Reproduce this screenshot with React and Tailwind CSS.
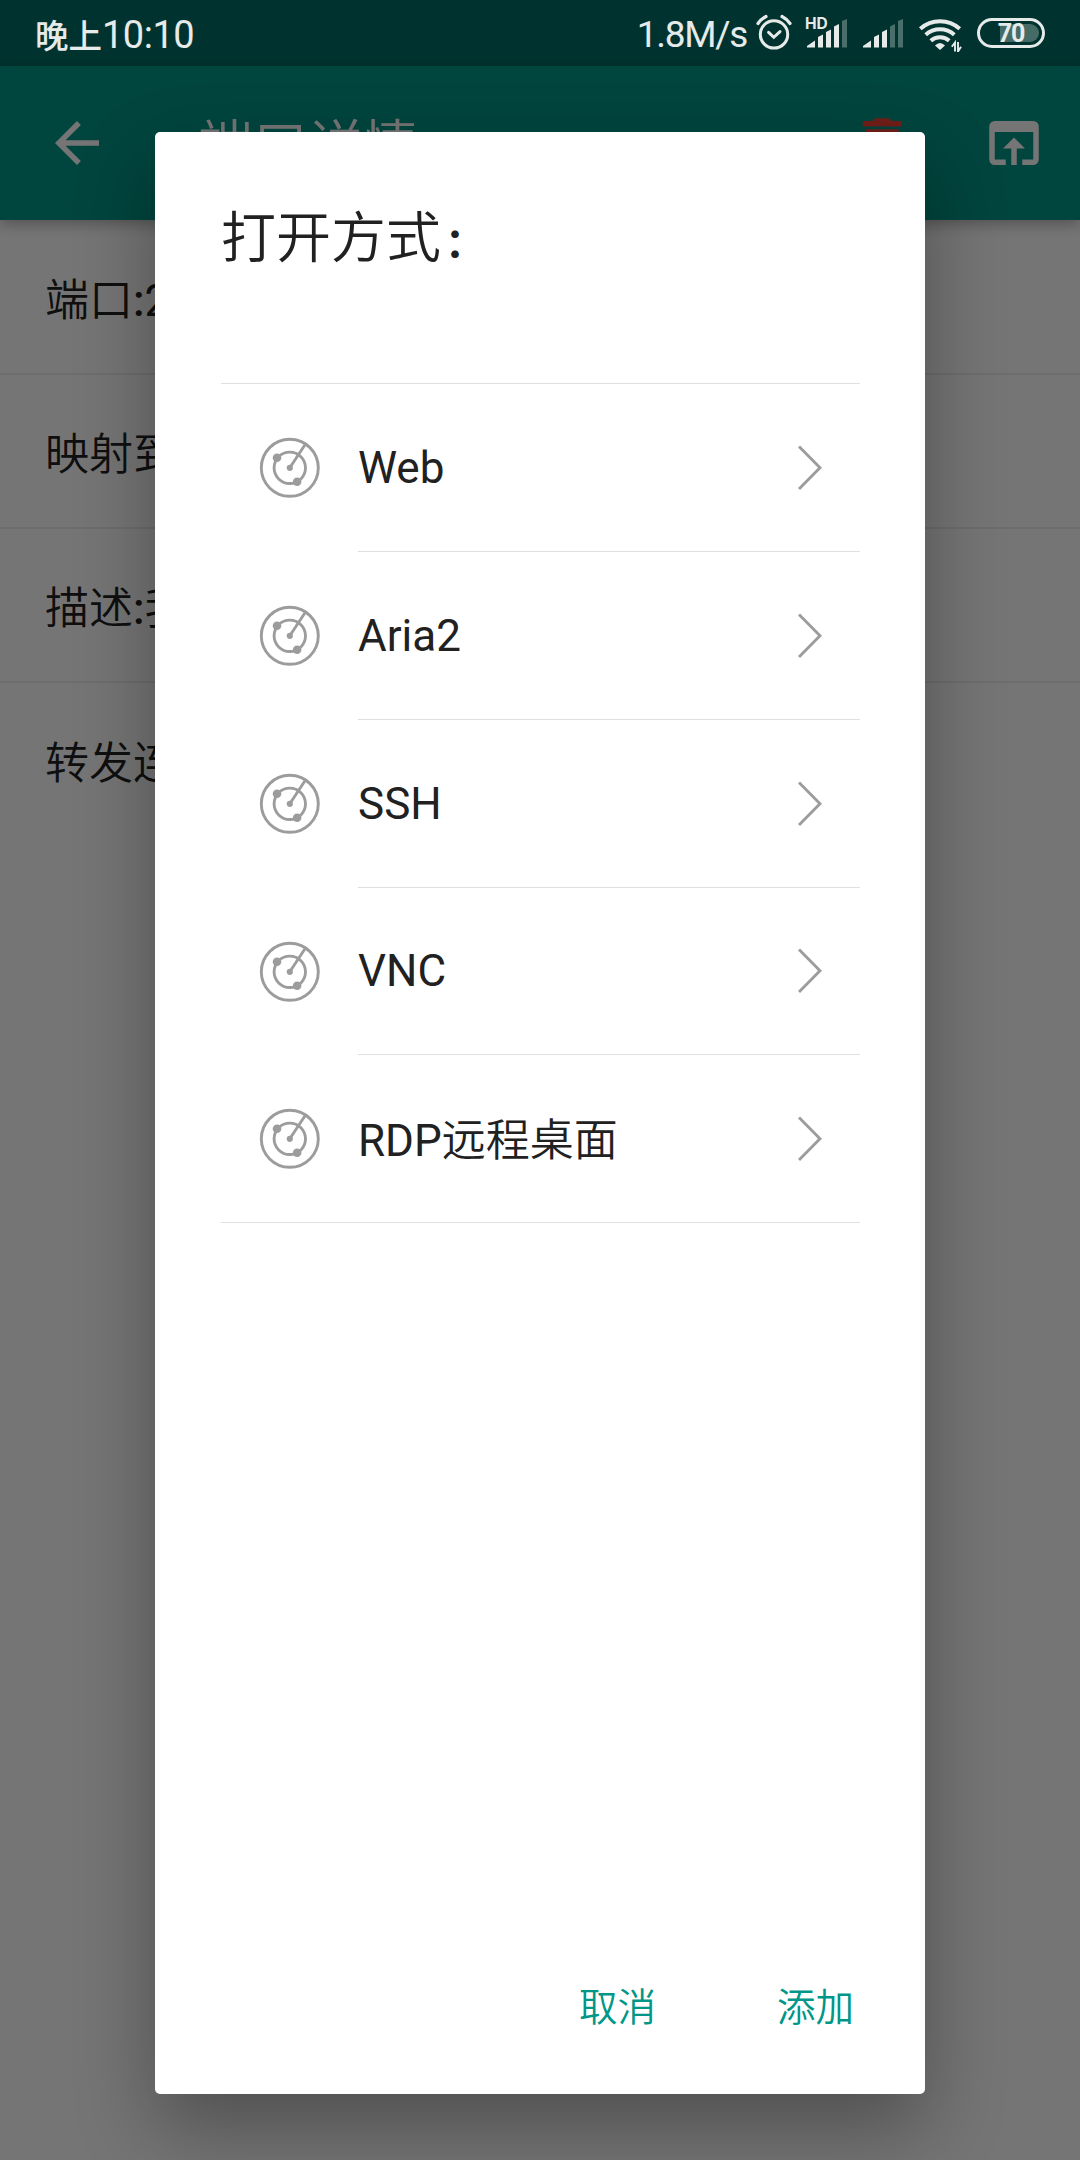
import React from "react";
import { MdArrowBack, MdDelete, MdOpenInBrowser } from "react-icons/md";

const details = [
  { label: "端口", value: "22" },
  { label: "映射到", value: "" },
  { label: "描述", value: "我的" },
  { label: "转发连接", value: "" },
];
const methods = [
  { latin: "Web", row: "h-[168px]" },
  { latin: "Aria2", row: "h-[168px]" },
  { latin: "SSH", row: "h-[168px]" },
  { latin: "VNC", row: "h-[167px]" },
  { latin: "RDP", cjk: "远程桌面", row: "h-[167px]" },
];

function RadarIcon() {
  return (
    <svg className="h-[66px] w-[66px] shrink-0" viewBox="0 0 66 66" fill="none" stroke="#9c9c9c" strokeWidth="2.9">
      <circle cx="32.8" cy="32.8" r="28.5" />
      <circle cx="32.8" cy="32.8" r="15.7" />
      <path d="M32.800 32.800L48.500 9" />
      <circle cx="32.8" cy="32.8" r="3.1" fill="#9c9c9c" stroke="none" />
      <circle cx="20" cy="22.8" r="4.3" fill="#9c9c9c" stroke="none" />
      <circle cx="40.1" cy="46.8" r="4.3" fill="#9c9c9c" stroke="none" />
    </svg>
  );
}

function Chevron() {
  return (
    <svg className="h-[46px] w-[24px] shrink-0" viewBox="0 0 24 46" fill="none" stroke="#9c9c9c" strokeWidth="2.9">
      <path d="M1 1.500L22 22.700L1 44" />
    </svg>
  );
}

function AlarmIcon() {
  return (
    <svg className="h-9 w-9 shrink-0" viewBox="0 0 36 36" fill="none" stroke="#e6ebea" strokeWidth="3">
      <circle cx="18" cy="20.4" r="13.7" />
      <path d="M12.6 18.3L17.8 23.3L24 17.6" strokeLinecap="round" />
      <path d="M2 9.5Q5 5 10 2.5M34 9.5Q31 5 26 2.5" strokeWidth="3.2" strokeLinecap="round" />
    </svg>
  );
}

function Signal({ level }) {
  const bars = [
    "M0 28.500L0 27L8 21.500V28.500Z",
    "M11 28.500V18L16 15.500V28.500Z",
    "M19 28.500V13L24 10.500V28.500Z",
    "M27 28.500V7.500L32 5V28.500Z",
    "M35 28.500V2L40 0V28.500Z",
  ];
  return (
    <svg className="h-[29px] w-10 shrink-0" viewBox="0 0 40 29">
      {bars.map((d, i) => (
        <path key={d} d={d} fill={i < level ? "#e6ebea" : "#4a6f6a"} />
      ))}
    </svg>
  );
}

function WifiIcon() {
  return (
    <svg className="h-[34px] w-[43px] shrink-0" viewBox="0 0 43 34" fill="none" stroke="#e6ebea" strokeWidth="4">
      <path d="M1.300 10.800A29.500 29.500 0 0 1 40.700 10.800" />
      <path d="M6.700 16.800A21.500 21.500 0 0 1 35.300 16.800" />
      <path d="M11.800 22.700A14 14 0 0 1 30.200 22.700" />
      <path d="M16 27.500Q21 22.500 26 27.500L21 32Z" fill="#e6ebea" stroke="none" />
      <path d="M36 33.500V24.500L32.800 28.800M39 24V33.500L42 28.800" strokeWidth="1.9" />
    </svg>
  );
}

function StatusBar() {
  return (
    <div className="absolute inset-x-0 top-0 z-20 flex h-[66px] items-center px-[35px] text-[#e6ebea]">
      <div className="mt-[4px] flex items-center whitespace-nowrap leading-none">
        <span className="-mt-[2px] font-['Noto_Sans_CJK_SC',sans-serif] text-[33.500px] font-medium">晚上</span>
        <span className="font-['Roboto',sans-serif] text-[38px] tracking-[-0.5px]">10:10</span>
      </div>
      <div className="ml-auto flex items-center">
        <span className="mr-[9px] mt-[3px] whitespace-nowrap font-['Roboto',sans-serif] text-[37px] leading-none tracking-[-1.3px]">1.8M/s</span>
        <div className="-mt-[2px]">
          <AlarmIcon />
        </div>
        <div className="relative ml-[15px]">
          <Signal level={4} />
          <span className="absolute -left-[2px] -top-[3px] font-['Inter',sans-serif] text-[15.500px] font-bold leading-none">HD</span>
        </div>
        <div className="ml-4">
          <Signal level={3} />
        </div>
        <div className="ml-[16px] mt-[3px]">
          <WifiIcon />
        </div>
        <div className="relative ml-[15px] flex h-[30px] w-[68px] items-center justify-center rounded-full border-[3px] border-[#e6ebea]">
          <div className="absolute left-[20px] top-[3px] h-[18px] w-[39px] rounded-r-full bg-[#456b66]" />
          <span className="relative mt-[1px] font-['Roboto',sans-serif] text-[25px] font-bold leading-none tracking-[-1px]">70</span>
        </div>
      </div>
    </div>
  );
}

export default function App() {
  return (
    <div className="relative h-[2160px] w-[1080px] overflow-hidden bg-white font-['Roboto','Noto_Sans_CJK_SC',sans-serif] text-[#212121]">
      <div className="h-[66px] bg-[#007066]" />
      <header className="relative flex h-[154px] items-center bg-[#009688] pl-[44px] pr-[33px] text-white shadow-[0_4px_14px_rgba(0,0,0,0.3)]">
        <MdArrowBack className="h-[66px] w-[66px]" />
        <h1 className="ml-[88px] mt-[7px] whitespace-nowrap text-[55px] font-[350] leading-none">端口详情</h1>
        <MdDelete className="ml-auto h-[66px] w-[66px] text-[#f44336]" />
        <MdOpenInBrowser className="ml-[66px] h-[66px] w-[66px]" />
      </header>
      <main className="pt-px">
        {details.map((d, i) => (
          <div
            key={d.label}
            className={
              "flex h-[154px] items-center whitespace-nowrap pl-[45px] text-[44px] font-[350] leading-none " +
              (i < 3 ? "border-b-2 border-[#ededed]" : "")
            }
          >
            <span className="mt-[8px]">
              {d.label}
              <span className="font-medium">:</span>
              <span className={d.value === "22" ? "font-normal" : ""}>{d.value}</span>
            </span>
          </div>
        ))}
      </main>

      <div className="absolute inset-0 bg-black/54" />
      <StatusBar />

      <div className="absolute inset-x-0 top-[132px] z-10 flex justify-center">
        <section className="flex h-[1962px] w-[770px] flex-col rounded-[5px] bg-white shadow-[0_34px_80px_rgba(0,0,0,0.32)]">
          <h2 className="mt-[79px] pl-[66px] text-[55px] font-[350] leading-[55px]">
            打开方式<span className="ml-[4px] text-[40px] font-bold leading-none">：</span>
          </h2>
          <ul className="ml-[66px] mr-[65px] mt-[117px] border-y border-[#e0e0e0]">
            {methods.map((m, i) => (
              <li key={m.latin} className={"flex items-center pl-[36px] " + m.row}>
                <RadarIcon />
                <div
                  className={
                    "ml-[35px] flex h-full flex-1 items-center justify-between pr-[38px] " +
                    (i < 4 ? "border-b border-[#e0e0e0]" : "")
                  }
                >
                  <span className={"text-[44px] leading-none " + (m.cjk ? "mt-[5px]" : "")}>
                    {m.latin}
                    {m.cjk && <span className="font-[350]">{m.cjk}</span>}
                  </span>
                  <Chevron />
                </div>
              </li>
            ))}
          </ul>
          <div className="mb-[66px] mt-auto flex justify-end gap-[121px] pr-[71px] text-[38.500px] font-[350] leading-[40px] text-[#009688]">
            <button>取消</button>
            <button>添加</button>
          </div>
        </section>
      </div>
    </div>
  );
}
